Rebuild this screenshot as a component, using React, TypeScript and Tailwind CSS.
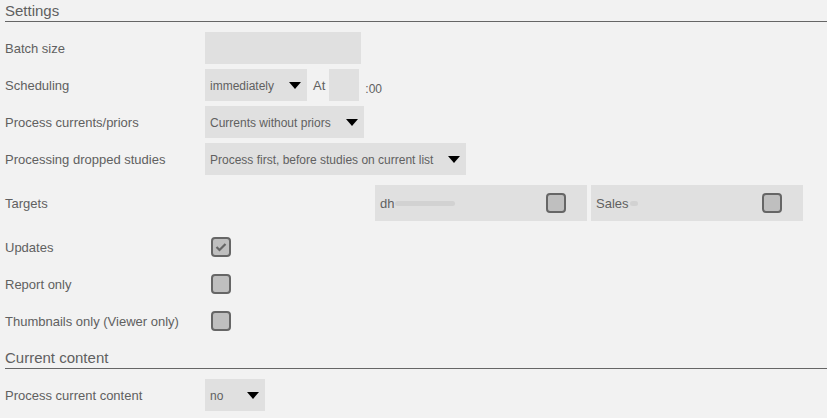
import React from 'react';

function Arrow() {
  return (
    <svg width="12" height="7" viewBox="0 0 12 7" className="shrink-0">
      <path d="M0 0 L12 0 L6 7 Z" fill="#000" />
    </svg>
  );
}

function Select({ value, width }: { value: string; width: string }) {
  return (
    <div className={`flex h-8 items-center justify-between bg-[#e0e0e0] pl-[5px] pr-[6px] text-[12px] text-[#606060] ${width}`}>
      <span className="pt-[2px]">{value}</span>
      <Arrow />
    </div>
  );
}

function Checkbox({ checked = false }: { checked?: boolean }) {
  return (
    <div className="flex h-5 w-5 items-center justify-center rounded-[4px] border-2 border-[#666] bg-[#bfbfbf]">
      {checked && (
        <svg width="12" height="10" viewBox="0 0 12 10">
          <path d="M1.5 5 L4.5 8 L10.5 2" stroke="#666" strokeWidth="2.2" fill="none" />
        </svg>
      )}
    </div>
  );
}

function Heading({ title }: { title: string }) {
  return (
    <div className="h-[22px] border-b border-[#666] pt-[1px] text-[15px] leading-[20px] text-[#606060]">{title}</div>
  );
}

function Row({ label, children, className = '' }: { label: string; children: React.ReactNode; className?: string }) {
  return (
    <div className={`flex h-8 items-center ${className}`}>
      <div className="w-[200px] shrink-0 pt-[2px] text-[13px] text-[#606060]">{label}</div>
      <div className="flex items-center">{children}</div>
    </div>
  );
}

function Target({ name, blurWidth }: { name: string; blurWidth: string }) {
  return (
    <div className="flex h-9 w-[212px] items-center justify-between bg-[#e0e0e0] pl-[5px] pr-[21px] text-[13px] text-[#606060]">
      <span className="flex items-center pt-[1px]">
        {name}
        <span className={`ml-[1px] h-[5px] rounded-full bg-[#d2d2d2] ${blurWidth}`} />
      </span>
      <Checkbox />
    </div>
  );
}

export default function App() {
  return (
    <div className="min-h-[418px] bg-[#f2f2f2] pl-[5px] font-['Liberation_Sans',Arial,sans-serif]">
      <Heading title="Settings" />
      <div className="mt-[10px] flex flex-col gap-[5px]">
        <Row label="Batch size">
          <div className="h-8 w-[156px] bg-[#e0e0e0]" />
        </Row>
        <Row label="Scheduling">
          <Select value="immediately" width="w-[102px]" />
          <span className="ml-[6px] pt-[2px] text-[13px] text-[#606060]">At</span>
          <div className="ml-[4px] h-8 w-[30px] bg-[#e0e0e0]" />
          <span className="ml-[6px] mt-[8px] text-[12px] text-[#606060]">:00</span>
        </Row>
        <Row label="Process currents/priors">
          <Select value="Currents without priors" width="w-[159px]" />
        </Row>
        <Row label="Processing dropped studies">
          <Select value="Process first, before studies on current list" width="w-[261px]" />
        </Row>
      </div>
      <div className="mt-[10px] flex h-9 items-center">
        <div className="w-[200px] shrink-0 pt-[2px] text-[13px] text-[#606060]">Targets</div>
        <div className="ml-[170px] flex gap-[4px]">
          <Target name="dh" blurWidth="w-[60px]" />
          <Target name="Sales" blurWidth="w-[8px]" />
        </div>
      </div>
      <div className="mt-[10px] flex flex-col gap-[5px]">
        <Row label="Updates">
          <div className="ml-[6px]"><Checkbox checked /></div>
        </Row>
        <Row label="Report only">
          <div className="ml-[6px]"><Checkbox /></div>
        </Row>
        <Row label="Thumbnails only (Viewer only)">
          <div className="ml-[6px]"><Checkbox /></div>
        </Row>
      </div>
      <div className="mt-[10px]">
        <Heading title="Current content" />
      </div>
      <div className="mt-[10px]">
        <Row label="Process current content">
          <Select value="no" width="w-[60px]" />
        </Row>
      </div>
    </div>
  );
}
